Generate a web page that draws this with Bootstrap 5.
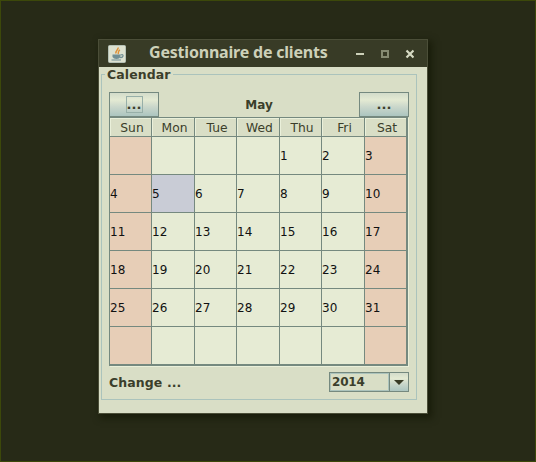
<!DOCTYPE html>
<html lang="fr">
<head>
<meta charset="utf-8">
<title>Gestionnaire de clients</title>
<link rel="stylesheet" href="https://cdn.jsdelivr.net/npm/bootstrap@5.3.0/dist/css/bootstrap.min.css">
<style>
body{height:462px;overflow:hidden;background:#272a17;border:1px solid #3c480a;padding:38px 0 0 97px;font:12px/14px "DejaVu Sans",sans-serif;color:#3b3e2b}
.win{width:330px;height:375px;border:1px solid #4b4e38;background:#d9dec6;box-shadow:3px 3px 7px 1px rgba(20,24,6,.75)}
.titlebar{height:27px;background:#383b26;padding-left:9px;padding-right:13px}
.titlebar h1{font:bold 16px/20px "Noto Sans",sans-serif;color:#cdd1b9;margin:-3px 0 0 23px;width:180px;white-space:nowrap;letter-spacing:-.2px}
.group{width:316px;height:326px;margin:7px 0 0 2px;border:1px solid #abc3bc;padding:0 7px}
.group-title{height:14px;margin:-8px 0 0 -4px;padding:1px 2px 0 2px;width:68px;background:#d9dec6;font-weight:bold;font-size:12.5px;white-space:nowrap;letter-spacing:.1px}
.bold{font-weight:bold}
.month-bar{height:25px;margin-top:11px;width:300px}
.jbtn{width:50px;height:25px;border:1px solid #75897f;border-radius:0;background:linear-gradient(#d3dcca,#e4ead3 30%,#cad7cb 60%,#acc5c0);padding:0;color:#3b3e2b;font:bold 13px/22px "DejaVu Sans",sans-serif}
.jbtn .ring{width:17px;height:17px;border:1px solid #97afa8;line-height:16px}
.cal{display:grid;grid-template-columns:42px 43px 42px 43px 42px 43px 42px;grid-template-rows:19px repeat(6,38px);width:299px;height:249px;border:1px solid #75897f;box-shadow:1px 1px #eaf0da}
.cal>div{border-right:1px solid #75897f;border-bottom:1px solid #75897f;background:#e6ebd4;color:#111;display:flex;align-items:center;white-space:nowrap;font-size:12px}
.cal>.we{background:#e7ceb7}
.cal>.today{background:#c9ccd6}
.cal>.hd{background:#d9dec6;color:#3b3e2b;justify-content:center;padding-left:3px;padding-top:2px;font-size:12.3px;box-shadow:inset 1px 1px #eaf0da}
.year-bar{width:300px;height:20px;margin-top:6px}
.year-bar>.bold{font-size:12.5px;letter-spacing:.1px;padding-top:1px}
.combo{width:80px;height:20px;border:1px solid #75897f}
.combo-value{width:59px;border:1px solid #abc3bc;padding-left:1px;line-height:16px;font-weight:bold;font-size:12px;letter-spacing:-.2px}
.combo-arrow{width:19px;border-left:1px solid #75897f;background:linear-gradient(#d3dcca,#e4ead3 30%,#cad7cb 60%,#acc5c0)}
</style>
<script src="https://cdn.jsdelivr.net/npm/bootstrap@5.3.0/dist/js/bootstrap.bundle.min.js"></script>
</head>
<body>
<main class="win">
  <header class="titlebar d-flex align-items-center">
    <svg width="18" height="18" viewBox="0 0 18 18"><rect x=".5" y=".5" width="17" height="17" rx="1" fill="#dde1d0" stroke="#b5c1b6"/><path d="M10 2.500C11 4.500 7 5.500 8 8.500M12 5C9.500 6 11 7.500 10 9" fill="none" stroke="#df9238" stroke-width="1.500"/><path d="M4.500 9.500h8v2.500q-1 2-4 2t-4-2z" fill="#718e93"/><path d="M12.500 10q3-1 2.500 1t-3 1.500M3.500 15h9.500" fill="none" stroke="#718e93" stroke-width="1.200"/></svg>
    <h1>Gestionnaire de clients</h1>
    <svg class="ms-auto" width="58" height="10" viewBox="0 0 58 10"><path d="M0 4h8v2H0z" fill="#cdd1b9"/><path d="M26 2h6v6h-6z" fill="none" stroke="#868b72" stroke-width="2"/><path d="M50.500 1.500l7 7M57.500 1.500l-7 7" stroke="#d6dac3" stroke-width="2.200"/></svg>
  </header>
  <section class="group">
    <div class="group-title">Calendar</div>
    <div class="month-bar d-flex justify-content-between align-items-center">
      <button class="jbtn d-flex align-items-center justify-content-center"><span class="ring">...</span></button>
      <span class="bold">May</span>
      <button class="jbtn">...</button>
    </div>
    <div class="cal">
      <div class="hd">Sun</div><div class="hd">Mon</div><div class="hd">Tue</div><div class="hd">Wed</div><div class="hd">Thu</div><div class="hd">Fri</div><div class="hd">Sat</div>
      <div class="we"></div><div></div><div></div><div></div><div>1</div><div>2</div><div class="we">3</div>
      <div class="we">4</div><div class="today">5</div><div>6</div><div>7</div><div>8</div><div>9</div><div class="we">10</div>
      <div class="we">11</div><div>12</div><div>13</div><div>14</div><div>15</div><div>16</div><div class="we">17</div>
      <div class="we">18</div><div>19</div><div>20</div><div>21</div><div>22</div><div>23</div><div class="we">24</div>
      <div class="we">25</div><div>26</div><div>27</div><div>28</div><div>29</div><div>30</div><div class="we">31</div>
      <div class="we"></div><div></div><div></div><div></div><div></div><div></div><div class="we"></div>
    </div>
    <div class="year-bar d-flex justify-content-between align-items-center">
      <span class="bold">Change ...</span>
      <div class="combo d-flex">
        <div class="combo-value">2014</div>
        <div class="combo-arrow d-flex align-items-center justify-content-center"><svg width="10" height="5" viewBox="0 0 10 5"><path d="M0 0h10L5 5z" fill="#383b26"/></svg></div>
      </div>
    </div>
  </section>
</main>
</body>
</html>
